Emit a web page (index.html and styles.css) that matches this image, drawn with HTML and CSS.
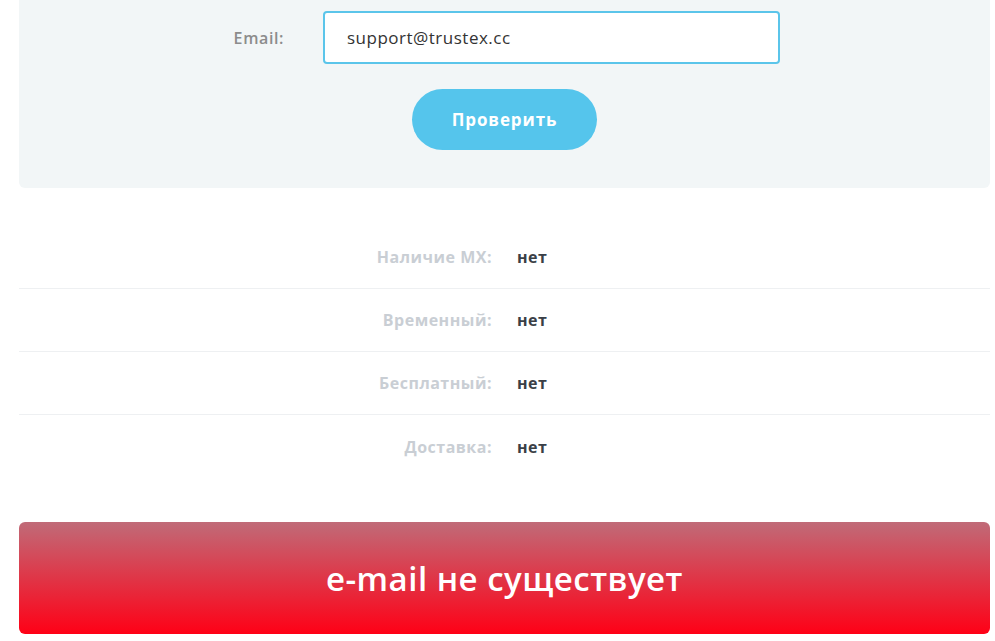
FILE: index.html
```html
<!DOCTYPE html>
<html lang="ru">
<head>
  <meta charset="UTF-8" />
  <meta name="viewport" content="width=device-width, initial-scale=1.0" />
  <title>Проверка email</title>
  <link rel="stylesheet" href="styles.css">
</head>
<body>
  <div class="page">
    <form class="check-form">
      <div class="form-row">
        <label for="email">Email:</label>
        <input type="text" id="email" name="email" value="support@trustex.cc" />
      </div>
      <button type="submit">Проверить</button>
    </form>

    <div class="results">
      <div class="result-row">
        <span class="result-label">Наличие MX:</span>
        <span class="result-value">нет</span>
      </div>
      <div class="result-row">
        <span class="result-label">Временный:</span>
        <span class="result-value">нет</span>
      </div>
      <div class="result-row">
        <span class="result-label">Бесплатный:</span>
        <span class="result-value">нет</span>
      </div>
      <div class="result-row">
        <span class="result-label">Доставка:</span>
        <span class="result-value">нет</span>
      </div>
    </div>

    <div class="verdict">e-mail не существует</div>
  </div>
</body>
</html>
```

FILE: styles.css
```css
body { margin: 0; background: #fff; font-family: "Open Sans", "Noto Sans", sans-serif; }
.page { width: 971px; margin-left: 19px; }

.check-form { background: #f2f6f7; border-radius: 0 0 6px 6px; padding: 11px 0 38px; display: flex; flex-direction: column; align-items: center; gap: 25px; }
.form-row { display: flex; align-items: center; width: 100%; }
.form-row label { width: 265px; text-align: right; margin-right: 39px; color: #8c8c8c; font-size: 16px; font-weight: 600; letter-spacing: 0.6px; }
.form-row input { box-sizing: border-box; width: 457px; height: 53px; padding: 0 22px; border: 2px solid #5bc5ea; border-radius: 4px; background: #fff; font-family: inherit; font-size: 17px; letter-spacing: 0.5px; color: #333; outline: none; }
button { width: 185px; height: 61px; border: none; border-radius: 31px; background: #55c5ec; color: #fff; font-family: inherit; font-size: 17px; font-weight: 700; letter-spacing: 0.9px; cursor: pointer; }

.results { margin-top: 38px; }
.result-row { display: grid; grid-template-columns: 1fr 1fr; column-gap: 25px; align-items: center; height: 63px; border-bottom: 1px solid #eef0f2; box-sizing: border-box; }
.result-row:last-child { border-bottom: none; }
.result-label { text-align: right; color: #c9ced4; font-size: 16px; font-weight: 700; letter-spacing: 0.5px; }
.result-value { color: #3a3f47; font-size: 16px; font-weight: 700; letter-spacing: 0.5px; }

.verdict { margin-top: 44px; height: 112px; border-radius: 6px; background: linear-gradient(to bottom, #c06b78, #ff0016); color: #fff; display: flex; align-items: center; justify-content: center; font-size: 33px; font-weight: 600; letter-spacing: 0.5px; }
```
